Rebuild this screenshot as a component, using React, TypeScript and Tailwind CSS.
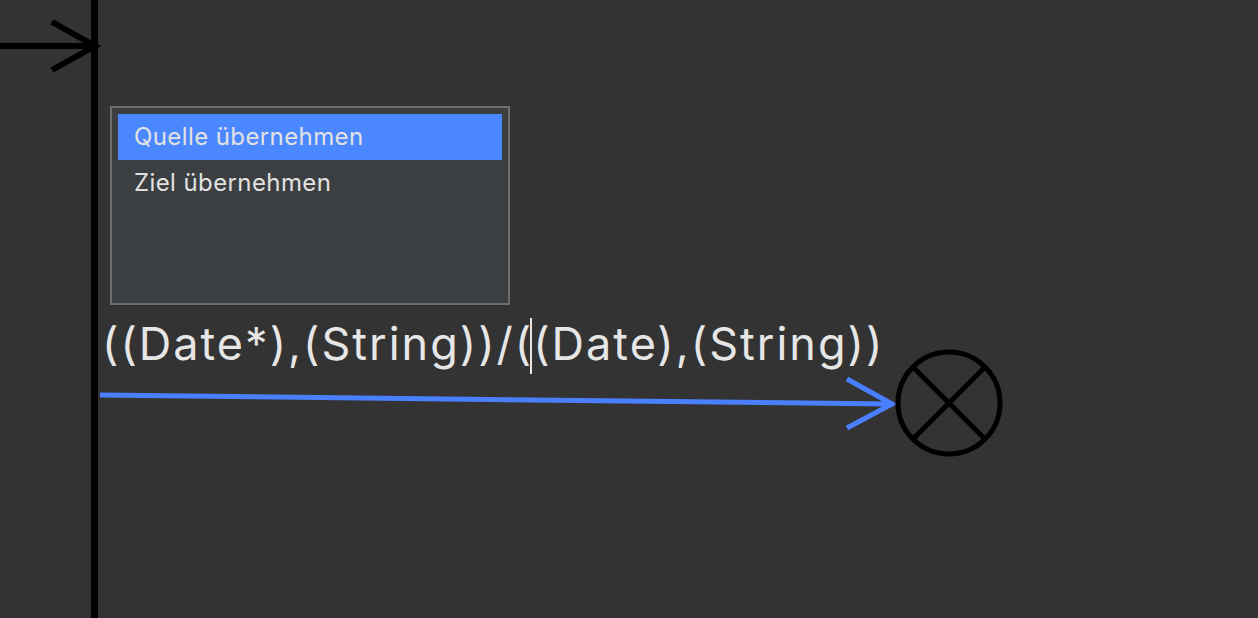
import React from "react";

// diagram canvas: transitions, a final node, and the open label editor with its popup
export default function App() {
  return (
    <div className="relative w-[1258px] h-[618px] overflow-hidden bg-[#333333]" style={{ fontFamily: "Inter, 'Liberation Sans', sans-serif" }}>
      {/* LINES */}
      <svg className="absolute left-0 top-0" width="1258" height="618" viewBox="0 0 1258 618">
        {/* lifeline / bar */}
        <line x1="94.5" y1="0" x2="94.5" y2="618" stroke="#000" strokeWidth="7" />
        {/* incoming arrow */}
        <line x1="0" y1="46" x2="94" y2="46" stroke="#000" strokeWidth="6" />
        <polyline points="52,22 95,46 52,70" fill="none" stroke="#000" strokeWidth="6" />
        {/* selected transition */}
        <line x1="100" y1="395" x2="892" y2="404" stroke="#4a80ff" strokeWidth="5" />
        <polyline points="847,379 892,404 847,428" fill="none" stroke="#4a80ff" strokeWidth="5" />
        {/* final node */}
        <circle cx="949" cy="403" r="51" fill="none" stroke="#000" strokeWidth="5" />
        <line x1="913" y1="367" x2="985" y2="439" stroke="#000" strokeWidth="5" />
        <line x1="985" y1="367" x2="913" y2="439" stroke="#000" strokeWidth="5" />
      </svg>

      {/* LABEL EDITOR */}
      <div className="absolute left-[102px] top-[318px] text-[45px] leading-[45px] tracking-[2px] text-[#e6e6e6] whitespace-nowrap">
        ((Date*),(String))/(
        <span className="inline-block w-[2px] h-[56px] bg-[#e6e6e6] align-[-14px] -ml-[3px] mr-[1px]" />
        (Date),(String))
      </div>

      {/* POPUP */}
      <div className="absolute left-[110px] top-[106px] w-[400px] h-[199px] border-2 border-[#6e6e6e] bg-[#3c3f41] px-[6px] pt-[6px] text-[24px] tracking-[0.4px] text-[#e2e2e2]">
        <div className="h-[46px] flex items-center pl-[16px] bg-[#4b87ff]">Quelle übernehmen</div>
        <div className="h-[46px] flex items-center pl-[16px]">Ziel übernehmen</div>
      </div>
    </div>
  );
}
